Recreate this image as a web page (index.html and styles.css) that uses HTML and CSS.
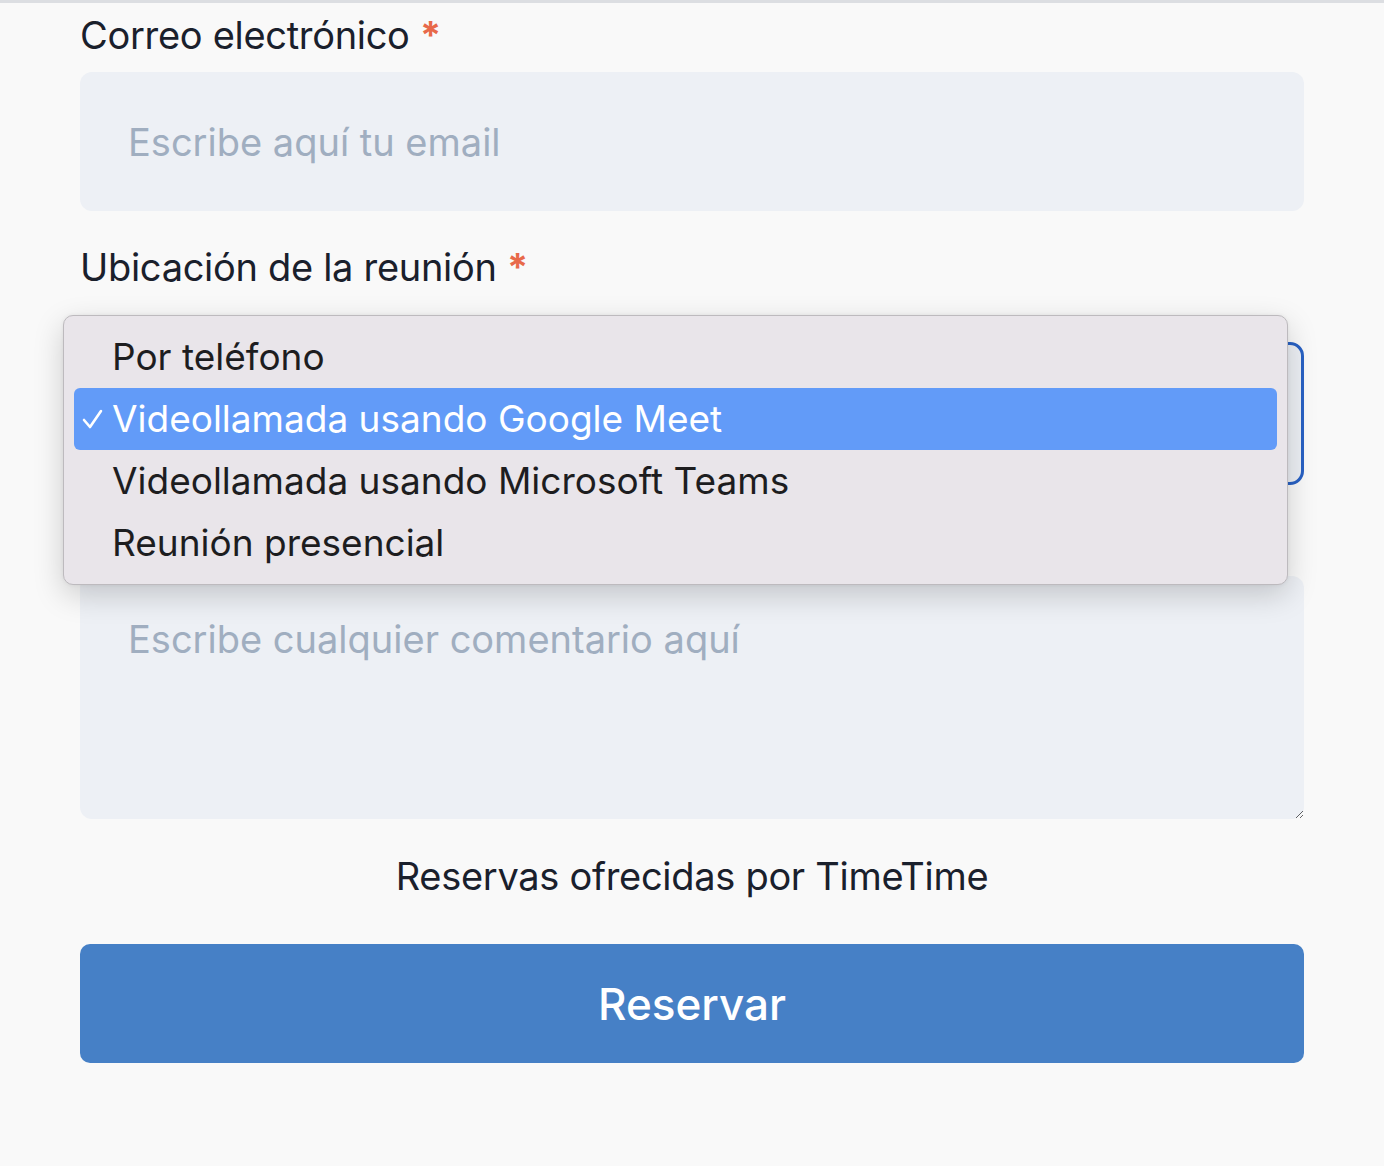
FILE: index.html
```
<!DOCTYPE html>
<html lang="es">

<head>
  <meta charset="UTF-8">
  <meta name="viewport" content="width=device-width, initial-scale=1.0">
  <title>Reservar</title>
  <link rel="stylesheet" href="styles.css">
</head>

<body>
  <form class="booking">
    <label class="field-label" for="email">Correo electrónico <span class="req">*</span></label>
    <input id="email" class="field" type="email" placeholder="Escribe aquí tu email">

    <label class="field-label loc" for="location">Ubicación de la reunión <span class="req">*</span></label>
    <div class="select-wrap">
      <div id="location" class="field select" aria-label="Videollamada usando Google Meet"></div>
      <ul class="menu">
        <li>Por teléfono</li>
        <li class="selected">
          <svg class="check" width="22" height="22" viewBox="0 0 22 22">
            <path d="M2 12 L8 19 L19 3" fill="none" stroke="#fff" stroke-width="2.6" stroke-linecap="round" stroke-linejoin="round"/>
          </svg>
          Videollamada usando Google Meet
        </li>
        <li>Videollamada usando Microsoft Teams</li>
        <li>Reunión presencial</li>
      </ul>
    </div>

    <label class="field-label comments" for="comments" aria-label="Comentarios"></label>
    <textarea id="comments" class="field area" placeholder="Escribe cualquier comentario aquí"></textarea>

    <p class="powered">Reservas ofrecidas por TimeTime</p>

    <button type="submit">Reservar</button>
  </form>
</body>

</html>
```

FILE: styles.css
```
* {
  box-sizing: border-box;
}

body {
  margin: 0;
  background: #f9f9f9;
  border-top: 3px solid #dcdee2;
  font-family: Inter, "Noto Sans", sans-serif;
  color: #1a202c;
  min-height: 1166px;
}

.booking {
  display: flex;
  flex-direction: column;
  padding: 10px 80px 0;
}

.field-label {
  display: block;
  font-size: 38px;
  line-height: 44px;
  letter-spacing: -0.3px;
  margin-bottom: 15px;
}

.field-label.loc {
  margin-top: 34px;
  margin-bottom: 0;
}

/* covered by the open menu */
.field-label.comments {
  height: 44px;
  margin-top: 32px;
}

.req {
  color: #e8694a;
  font-weight: 700;
}

.field {
  width: 100%;
  height: 139px;
  border: none;
  outline: none;
  border-radius: 12px;
  background: #edf0f5;
  padding: 0 48px;
  font-family: inherit;
  font-size: 38px;
  color: #1a202c;
}

.field::placeholder {
  color: #a0aec0;
}

.select-wrap {
  position: relative;
  margin-top: 53px;
}

.select {
  height: 143px;
  border: 3px solid #2861c4;
  border-radius: 14px;
}

.menu {
  position: absolute;
  top: -27px;
  left: -17px;
  width: 1225px;
  margin: 0;
  padding: 10px 10px;
  list-style: none;
  background: #e9e5ea;
  border: 1px solid #bdbabe;
  border-radius: 10px;
  box-shadow: 0 10px 30px rgba(0, 0, 0, 0.18), 0 0 4px rgba(0, 0, 0, 0.06);
  font-size: 37px;
  color: #1d1d1f;
}

.menu li {
  position: relative;
  height: 62px;
  line-height: 62px;
  padding-left: 38px;
  border-radius: 6px;
}

.menu .selected {
  background: #629bf8;
  color: #fff;
}

.check {
  position: absolute;
  left: 8px;
  top: 20px;
}

.area {
  height: 243px;
  padding-top: 40px;
  resize: vertical;
  margin-bottom: 35px;
}

.powered {
  margin: 0 0 46px;
  text-align: center;
  font-size: 38px;
  line-height: 44px;
  letter-spacing: -0.3px;
}

button {
  height: 119px;
  border: none;
  border-radius: 10px;
  background: #4680c6;
  color: #fff;
  font-family: inherit;
  font-size: 44px;
  font-weight: 500;
}
```
